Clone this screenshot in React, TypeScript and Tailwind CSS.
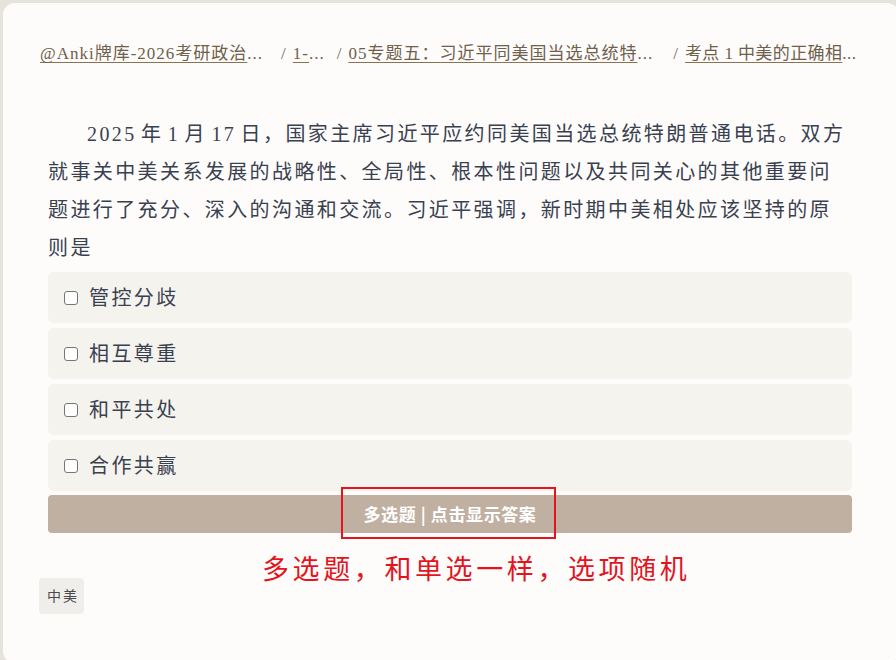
import React from "react";

const serif = { fontFamily: '"Liberation Serif", "Noto Sans CJK SC", serif' };

function Crumb({ text, extra = "" }: { text: string; extra?: string }) {
  return (
    <span className={`whitespace-nowrap ${extra}`}>
      <span className="underline decoration-[#8a7253] underline-offset-[3px] text-[#6f604c]">{text}</span>
      <span className="text-[#6f604c]">...</span>
    </span>
  );
}

const options = ["管控分歧", "相互尊重", "和平共处", "合作共赢"];

export default function App() {
  return (
    <div className="w-[896px] h-[660px] bg-[#e6e2dc] pt-[3px] pl-[3px] overflow-hidden">
      <div
        className="relative w-[896px] h-[660px] rounded-[12px] bg-[#fdfcfa] px-[36px] pt-[39px]"
        style={serif}
      >
        {/* breadcrumb */}
        <div className="flex items-center h-[24px] leading-[24px] text-[17px] tracking-[1px] pl-[1px]">
          <Crumb text="@Anki牌库-2026考研政治" />
          <span className="text-[#6f6a63] ml-[18px] mr-[6px]">/</span>
          <Crumb text="1-" />
          <span className="text-[#6f6a63] ml-[12px] mr-[6px]">/</span>
          <Crumb text="05专题五：习近平同美国当选总统特" />
          <span className="text-[#6f6a63] ml-[20px] mr-[6px]">/</span>
          <Crumb text="考点 1 中美的正确相" extra="tracking-[0.4px]" />
        </div>

        {/* question */}
        <div className="ml-[9px] mr-[11px] mt-[49px]">
          <p className="text-[20px] leading-[38px] tracking-[2.4px] [word-spacing:-3px] [text-autospace:no-autospace] text-[#394150] indent-[39px]">
            2025 年 1 月 17 日，国家主席习近平应约同美国当选总统特朗普通电话。双方就事关中美关系发展的战略性、全局性、根本性问题以及共同关心的其他重要问题进行了充分、深入的沟通和交流。习近平强调，新时期中美相处应该坚持的原则是
          </p>

          <div className="mt-[5px] flex flex-col gap-[5px]">
            {options.map((o) => (
              <div
                key={o}
                className="h-[51px] rounded-[6px] bg-[#f5f3ee] flex items-center pl-[16px]"
              >
                <span className="w-[14px] h-[14px] rounded-[3px] border border-[#767676] bg-white shrink-0" />
                <span className="ml-[11px] text-[20px] tracking-[2.4px] text-[#394150] leading-none">
                  {o}
                </span>
              </div>
            ))}
          </div>

          <div className="mt-[4px] h-[38px] rounded-[4px] bg-[#c0b0a1] flex items-center justify-center">
            <span
              className="text-white font-bold text-[17px] tracking-[0.6px]"
              style={{ fontFamily: '"Noto Sans CJK SC", "Noto Sans", sans-serif' }}
            >
              多选题 | 点击显示答案
            </span>
          </div>
        </div>

        {/* tag */}
        <div className="mt-[45px] flex">
          <span className="h-[36px] pl-[8px] pr-[5px] rounded-[4px] bg-[#efeeeb] flex items-center text-[14px] tracking-[2px] text-[#4a4a4a]">
            中美
          </span>
        </div>

        {/* annotation overlays */}
        <div className="absolute left-[338px] top-[484px] w-[215px] h-[52px] border-2 border-[#e3141e]" />
        <div
          className="absolute left-[259px] top-[549px] text-[27px] leading-[32px] tracking-[3.6px] text-[#e3141e] whitespace-nowrap"
          style={{ fontFamily: '"Noto Sans CJK SC", sans-serif' }}
        >
          多选题，和单选一样，选项随机
        </div>
      </div>
    </div>
  );
}
